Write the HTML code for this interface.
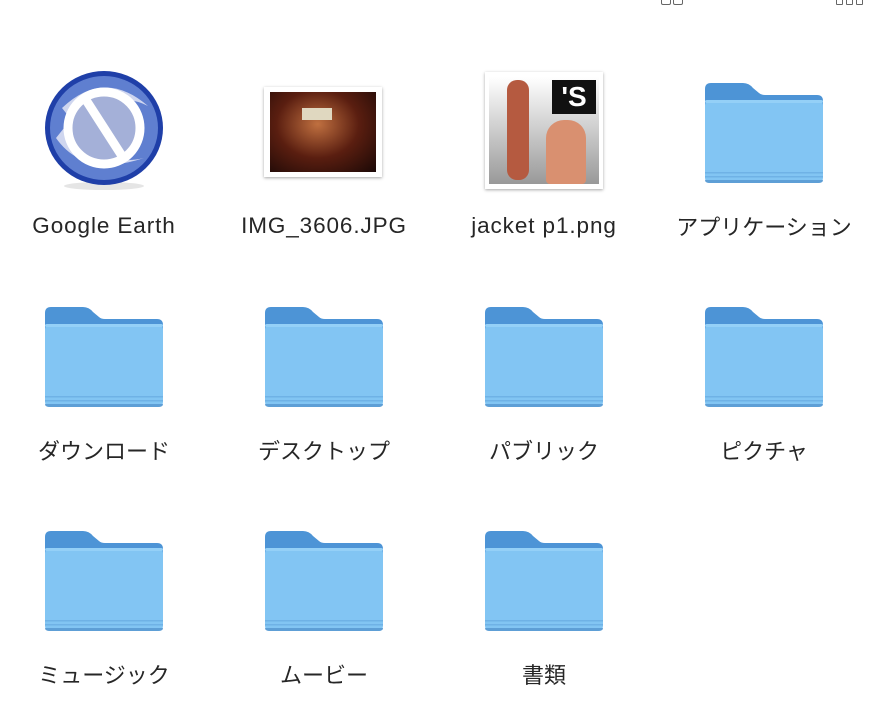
<!DOCTYPE html>
<html><head><meta charset="utf-8"><style>
body{margin:0;width:886px;height:728px;background:#fff;position:relative;overflow:hidden;font-family:"Liberation Sans","Noto Sans CJK JP",sans-serif}
.it{position:absolute;width:220px;text-align:center}
.lbl{position:absolute;left:0;width:220px;text-align:center;font-size:22px;color:#262626;white-space:nowrap;top:213px;line-height:30px}
.lat{letter-spacing:0.9px;font-size:22.5px;top:211px}
svg.f{position:absolute;left:50px;width:120px;height:104px}
</style></head><body>
<div style="position:absolute;left:661px;top:-3px;width:8px;height:6px;border:1.5px solid #666;border-radius:2px"></div>
<div style="position:absolute;left:673px;top:-3px;width:8px;height:6px;border:1.5px solid #666;border-radius:2px"></div>
<div style="position:absolute;left:836px;top:-3px;width:5px;height:6px;border:1.5px solid #666;border-radius:1px"></div>
<div style="position:absolute;left:846px;top:-3px;width:5px;height:6px;border:1.5px solid #666;border-radius:1px"></div>
<div style="position:absolute;left:856px;top:-3px;width:5px;height:6px;border:1.5px solid #666;border-radius:1px"></div>

<svg width="0" height="0" style="position:absolute"><defs>
<g id="fold">
<path d="M6,0 H38 Q44,0 48,5 L54,10 Q56,12 60,12 H112 Q118,12 118,18 V90 H0 V6 Q0,0 6,0Z" fill="#4d94d6"/>
<rect x="0" y="17" width="118" height="83" rx="5" fill="#82c5f3"/>
<rect x="0" y="17" width="118" height="3" rx="2" fill="#94d0f7"/>
<rect x="0" y="89" width="118" height="1.5" fill="#6fb2e6"/>
<rect x="0" y="93" width="118" height="1.5" fill="#6fb2e6"/>
<path d="M0,97 H118 Q118,100 113,100 H5 Q0,100 0,97Z" fill="#5e9fd6"/>
</g></defs></svg>

<!-- Row 1 -->
<div class="it" style="left:-6px;top:0">
<svg style="position:absolute;left:50px;top:68px" width="120" height="124" viewBox="0 0 120 124">
<ellipse cx="60" cy="118" rx="40" ry="4" fill="#ccc" opacity=".5"/>
<ellipse cx="60" cy="60" rx="59" ry="57" fill="#1f3fa8"/>
<ellipse cx="60" cy="60" rx="54" ry="52" fill="#5f7fd0"/>
<path d="M18,40 Q60,0 104,38 Q70,20 30,55Z" fill="#cfd6ef"/>
<path d="M12,70 Q40,110 100,90 Q60,100 20,60Z" fill="#cfd6ef"/>
<circle cx="60" cy="60" r="36" fill="#a4b0d8"/>
<circle cx="60" cy="60" r="36" fill="none" stroke="#fff" stroke-width="9"/>
<line x1="42" y1="32" x2="78" y2="88" stroke="#fff" stroke-width="9"/>
</svg>
<div class="lbl lat">Google Earth</div></div>

<div class="it" style="left:214px;top:0">
<div style="position:absolute;left:50px;top:87px;width:118px;height:90px;background:#fff;box-shadow:0 1px 3px rgba(0,0,0,.35)"></div>
<div style="position:absolute;left:56px;top:92px;width:106px;height:80px;background:radial-gradient(ellipse at 45% 40%,#c07040,#5a1e10 50%,#1a0806)"></div>
<div style="position:absolute;left:88px;top:108px;width:30px;height:12px;background:#e0d8c0"></div>
<div class="lbl lat">IMG_3606.JPG</div></div>

<div class="it" style="left:434px;top:0">
<div style="position:absolute;left:51px;top:72px;width:118px;height:117px;background:#fff;box-shadow:0 1px 3px rgba(0,0,0,.35)"></div>
<div style="position:absolute;left:55px;top:77px;width:110px;height:107px;background:linear-gradient(#fff,#999)"></div>
<div style="position:absolute;left:73px;top:80px;width:22px;height:100px;background:#b55a40;border-radius:10px"></div>
<div style="position:absolute;left:118px;top:80px;width:44px;height:34px;background:#111;color:#fff;font:bold 28px 'Liberation Sans';text-align:center;line-height:34px">'S</div>
<div style="position:absolute;left:112px;top:120px;width:40px;height:64px;background:#d99070;border-radius:18px 18px 4px 4px"></div>
<div class="lbl lat">jacket p1.png</div></div>

<div class="it" style="left:654px;top:0"><svg class="f" style="top:83px" viewBox="0 0 118 104"><use href="#fold"/></svg>
<div class="lbl">アプリケーション</div></div>

<!-- Row 2 -->
<div class="it" style="left:-6px;top:224px"><svg class="f" style="top:83px" viewBox="0 0 118 104"><use href="#fold"/></svg><div class="lbl">ダウンロード</div></div>
<div class="it" style="left:214px;top:224px"><svg class="f" style="top:83px" viewBox="0 0 118 104"><use href="#fold"/></svg><div class="lbl">デスクトップ</div></div>
<div class="it" style="left:434px;top:224px"><svg class="f" style="top:83px" viewBox="0 0 118 104"><use href="#fold"/></svg><div class="lbl">パブリック</div></div>
<div class="it" style="left:654px;top:224px"><svg class="f" style="top:83px" viewBox="0 0 118 104"><use href="#fold"/></svg><div class="lbl">ピクチャ</div></div>

<!-- Row 3 -->
<div class="it" style="left:-6px;top:448px"><svg class="f" style="top:83px" viewBox="0 0 118 104"><use href="#fold"/></svg><div class="lbl">ミュージック</div></div>
<div class="it" style="left:214px;top:448px"><svg class="f" style="top:83px" viewBox="0 0 118 104"><use href="#fold"/></svg><div class="lbl">ムービー</div></div>
<div class="it" style="left:434px;top:448px"><svg class="f" style="top:83px" viewBox="0 0 118 104"><use href="#fold"/></svg><div class="lbl">書類</div></div>
</body></html>
